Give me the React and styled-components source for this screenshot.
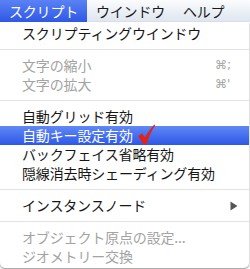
import React from "react";
import styled, { createGlobalStyle } from "styled-components";

const Global = createGlobalStyle`
  html, body { margin: 0; padding: 0; background: #ffffff; }
  body { font-family: "Noto Sans CJK JP", "Noto Sans", sans-serif; }
`;

const Page = styled.div`
  width: 250px;
  height: 269px;
  overflow: hidden;
  position: relative;
  background: #ffffff;
`;

const MenuBar = styled.div`
  display: flex;
  height: 22px;
  background: linear-gradient(#fbfcfe, #dde5ef);
  font-size: 14px;
  line-height: 22px;
`;

const BarItem = styled.div`
  padding: 0 9px;
  white-space: nowrap;
  color: ${(p) => (p.$active ? "#ffffff" : "#1a1a1a")};
  background: ${(p) =>
    p.$active ? "linear-gradient(#5a82f4, #2f58e6)" : "transparent"};
  letter-spacing: -0.2px;
`;

const Menu = styled.div`
  width: 249px;
  box-sizing: border-box;
  padding: 2px 0 2px;
  background: #ffffff;
  border-radius: 0 0 5px 5px;
  box-shadow: 0 1px 2px rgba(0, 0, 0, 0.45);
`;

const Row = styled.div`
  display: flex;
  align-items: center;
  height: 19px;
  padding: 0 11px 0 22px;
  font-size: 14px;
  line-height: 19px;
  color: ${(p) => (p.$selected ? "#ffffff" : p.$disabled ? "#a3a3a3" : "#161616")};
  background: ${(p) =>
    p.$selected ? "linear-gradient(#6088f5, #2d58e8)" : "transparent"};
`;

const Label = styled.span`
  flex: 1;
  display: flex;
  align-items: center;
  white-space: nowrap;
  letter-spacing: -0.15px;
`;

const Shortcut = styled.span`
  color: #a3a3a3;
  font-family: "DejaVu Sans", sans-serif;
  font-size: 12px;
  width: 18px;
  margin-right: 5px;
`;

const Separator = styled.div`
  height: 1px;
  background: #e3e3e3;
  margin: 6px 0;
`;

const CheckIcon = styled.svg`
  flex: none;
  margin-left: 5px;
  margin-top: -2px;
  overflow: visible;
`;

const Check = () => (
  <CheckIcon width="17" height="20" viewBox="0 0 17 20">
    <path
      d="M0 11 L4.2 8.4 L7 12.6 C9.6 7.6 12.6 3.4 16.4 -0.6 L17.2 0.6 C13.8 5.4 10.8 11.4 8.8 19.2 L5.4 19.2 Z"
      fill="#e2231a"
    />
  </CheckIcon>
);

const Arrow = () => (
  <svg width="8" height="10" viewBox="0 0 8 10">
    <path d="M0.5 0.5 L7.5 5 L0.5 9.5 Z" fill="#555555" />
  </svg>
);

export default function App() {
  return (
    <Page>
      <Global />
      <MenuBar>
        <BarItem $active>スクリプト</BarItem>
        <BarItem>ウインドウ</BarItem>
        <BarItem>ヘルプ</BarItem>
      </MenuBar>
      <Menu>
        <Row><Label>スクリプティングウインドウ</Label></Row>
        <Separator />
        <Row $disabled><Label>文字の縮小</Label><Shortcut>⌘;</Shortcut></Row>
        <Row $disabled><Label>文字の拡大</Label><Shortcut>⌘'</Shortcut></Row>
        <Separator />
        <Row><Label>自動グリッド有効</Label></Row>
        <Row $selected><Label>自動キー設定有効<Check /></Label></Row>
        <Row><Label>バックフェイス省略有効</Label></Row>
        <Row><Label>隠線消去時シェーディング有効</Label></Row>
        <Separator />
        <Row><Label>インスタンスノード</Label><Arrow /></Row>
        <Separator />
        <Row $disabled><Label>オブジェクト原点の設定...</Label></Row>
        <Row $disabled><Label>ジオメトリー交換</Label></Row>
      </Menu>
    </Page>
  );
}
